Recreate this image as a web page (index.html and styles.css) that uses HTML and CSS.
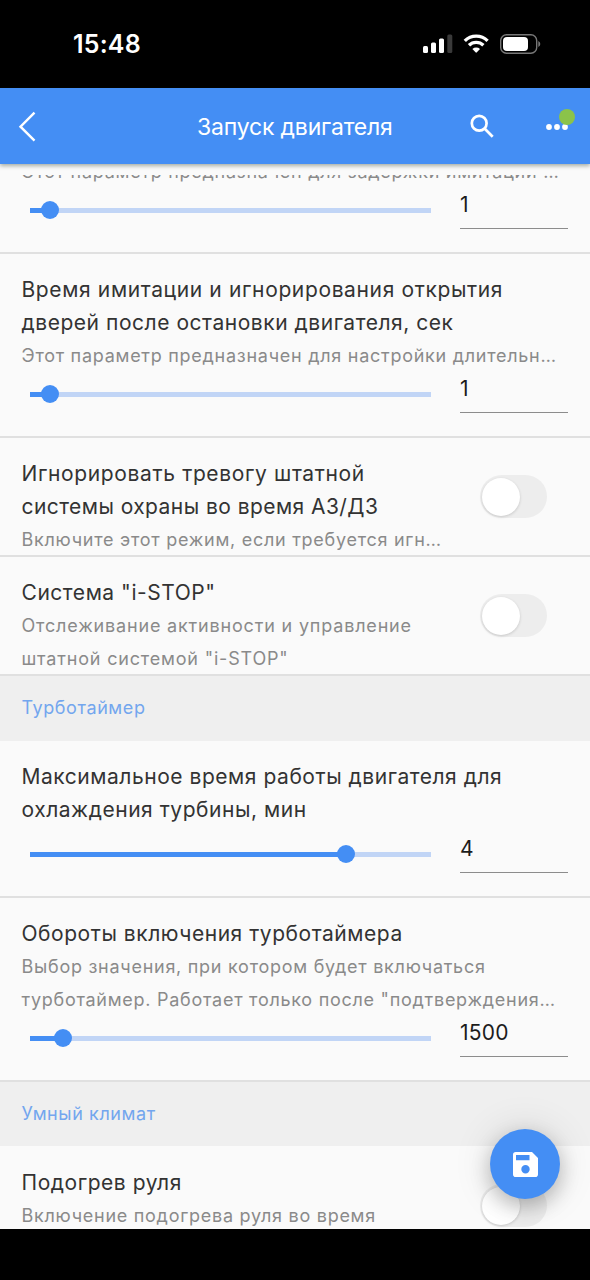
FILE: index.html
```html
<!DOCTYPE html>
<html lang="ru">
<head>
<meta charset="utf-8">
<title>Запуск двигателя</title>
<link rel="stylesheet" href="styles.css">
</head>
<body>
<div class="phone">
  <div class="status">
    <span class="clock">15:48</span>
    <svg class="status-icons" width="120" height="24" viewBox="0 0 120 24">
      <rect x="3" y="14" width="5" height="7" rx="1.5" fill="#fff"/>
      <rect x="11" y="10.500" width="5" height="10.500" rx="1.500" fill="#fff"/>
      <rect x="19" y="6.500" width="5" height="14.500" rx="1.500" fill="#fff"/>
      <rect x="27.300" y="2.500" width="5" height="18.500" rx="1.500" fill="#3a3a3a"/>
      <g fill="none" stroke="#fff" stroke-width="3.300">
        <path d="M44.800 8.800a16.200 16.200 0 0 1 22.800 0"/>
        <path d="M49 13.300a10.300 10.300 0 0 1 14.400 0"/>
      </g>
      <path d="M52.400 17a5.600 5.600 0 0 1 7.600 0l-3.100 3.300q-.7.700-1.400 0z" fill="#fff"/>
      <rect x="80.700" y="2.700" width="36" height="18.500" rx="5.800" fill="none" stroke="#777" stroke-width="1.400"/>
      <rect x="83" y="5" width="25" height="14" rx="4" fill="#fff"/>
      <path d="M118.300 9q2 1 2 3t-2 3z" fill="#777"/>
    </svg>
  </div>
  <header class="bar">
    <svg class="back" width="20" height="32" viewBox="0 0 20 32"><path d="M16.500 2.700L2.500 16.700l14 14" fill="none" stroke="#fff" stroke-width="2.400"/></svg>
    <h1 class="bar-title">Запуск двигателя</h1>
    <svg class="search" width="26" height="26" viewBox="0 0 26 26"><g fill="none" stroke="#fff" stroke-width="2.700"><circle cx="9.200" cy="10.200" r="7.400"/><path d="M14.300 15.300L22.700 23.700"/></g></svg>
    <div class="more">
      <svg width="24" height="8" viewBox="0 0 24 8" fill="#fff"><circle cx="4" cy="4" r="2.900"/><circle cx="12" cy="4" r="2.900"/><circle cx="20" cy="4" r="2.900"/></svg>
      <span class="online"></span>
    </div>
  </header>
  <main class="list">
    <section class="row row-cut">
      <p class="sub">Этот параметр предназначен для задержки имитации …</p>
      <div class="control"><div class="slider"><i class="fill" style="width:20px"></i><i class="thumb"></i></div><span class="value">1</span></div>
    </section>
    <section class="row row-tall">
      <h2 class="title"><span class="loose">Время имитации и игнорирования открытия</span><br>дверей после остановки двигателя, сек</h2>
      <p class="sub">Этот параметр предназначен для настройки длительн…</p>
      <div class="control"><div class="slider"><i class="fill" style="width:20px"></i><i class="thumb"></i></div><span class="value">1</span></div>
    </section>
    <section class="row row-switch">
      <div><h2 class="title"><span class="loose">Игнорировать тревогу штатной</span><br><span class="tight">системы охраны во время АЗ/ДЗ</span></h2>
      <p class="sub">Включите этот режим, если требуется игн…</p></div>
      <span class="switch"></span>
    </section>
    <section class="row row-switch">
      <div><h2 class="title">Система "i-STOP"</h2>
      <p class="sub sub-loose">Отслеживание активности и управление<br>штатной системой "i-STOP"</p></div>
      <span class="switch"></span>
    </section>
    <h3 class="group">Турботаймер</h3>
    <section class="row row-medium">
      <h2 class="title">Максимальное время работы двигателя для<br>охлаждения турбины, мин</h2>
      <div class="control"><div class="slider"><i class="fill" style="width:316px"></i><i class="thumb"></i></div><span class="value">4</span></div>
    </section>
    <section class="row row-tall">
      <h2 class="title">Обороты включения турботаймера</h2>
      <p class="sub">Выбор значения, при котором будет включаться<br>турботаймер. Работает только после "подтверждения…</p>
      <div class="control"><div class="slider"><i class="fill" style="width:33px"></i><i class="thumb"></i></div><span class="value">1500</span></div>
    </section>
    <h3 class="group group-short">Умный климат</h3>
    <section class="row row-switch row-last">
      <div><h2 class="title">Подогрев руля</h2>
      <p class="sub">Включение подогрева руля во время</p></div>
      <span class="switch"></span>
    </section>
    <button class="save" aria-label="Сохранить">
      <svg width="25" height="25" viewBox="0 0 25 25"><path fill="#fff" fill-rule="evenodd" d="M2.800 0H19l6 6v16.200a2.800 2.800 0 0 1-2.800 2.800H2.800A2.800 2.800 0 0 1 0 22.200V2.800A2.800 2.800 0 0 1 2.800 0zM3 3v5.300h13.500V3zM12.500 13a4.200 4.200 0 1 0 0 8.400 4.200 4.200 0 0 0 0-8.400z"/></svg>
    </button>
  </main>
</div>
</body>
</html>
```
FILE: styles.css
```css
* { box-sizing: border-box; }
body { margin: 0; background: #000; font-family: Inter, "Noto Sans", sans-serif; }
h1, h2, h3, p { margin: 0; font-weight: 400; }
.phone { width: 590px; height: 1280px; display: flex; flex-direction: column; overflow: hidden; }
.status { height: 88px; flex: none; display: flex; justify-content: space-between; padding: 32px 50px 0 73px; color: #fff; }
.clock { font-size: 25px; line-height: 25px; font-weight: 600; letter-spacing: .2px; }
.status-icons { overflow: visible; }
.bar { position: relative; z-index: 1; height: 76px; flex: none; display: grid; grid-template-columns: 179px 230px 60px 1fr; align-items: center; background: #448ef4; box-shadow: 0 2px 4px rgba(40, 60, 40, .4); color: #fff; }
.back { margin-left: 18px; }
.bar-title { font-size: 23px; line-height: 30px; letter-spacing: -.18px; white-space: nowrap; padding: 2px 0 0 18px; }
.search { margin-left: 61px; }
.more { position: relative; display: flex; margin: 1px 0 0 76px; }
.online { position: absolute; left: 14px; top: -14px; width: 16px; height: 16px; border-radius: 50%; background: #8bc34a; }
.list { position: relative; height: 1065px; flex: none; overflow: hidden; padding-top: 11px; background: #fafafa; }
.row { display: flex; flex-direction: column; padding: 19px 0 0 21.5px; border-bottom: 2px solid #e0e0e0; overflow: hidden; white-space: nowrap; }
.row-cut { height: 79px; padding-top: 0; justify-content: flex-end; }
.row-tall { height: 184px; }
.row-medium { height: 157px; }
.row-switch { height: 119px; flex-direction: row; justify-content: space-between; padding-right: 43px; }
.row-last { padding-top: 20px; }
.title { font-size: 21px; line-height: 33px; letter-spacing: .54px; color: #333; }
.loose { letter-spacing: .63px; }
.tight { letter-spacing: .44px; }
.sub { flex: none; font-size: 18px; line-height: 33px; letter-spacing: .73px; color: #8a8a8a; }
.sub-loose { letter-spacing: .82px; }
.group { height: 65px; padding-left: 21.5px; background: #efefef; color: #73a6ee; font-size: 18px; line-height: 64px; letter-spacing: .58px; }
.group-short { height: 64px; }
.control { flex: none; height: 64px; margin-top: auto; display: flex; justify-content: space-between; padding: 0 22px 0 8px; }
.slider { width: 401px; height: 44px; display: flex; align-items: center; background: linear-gradient(#c1d5f6, #c1d5f6) center / 100% 5px no-repeat; }
.fill { height: 5px; background: #448ef4; }
.thumb { flex: none; width: 18px; height: 18px; margin-left: -9px; border-radius: 50%; background: #448ef4; }
.value { width: 108px; height: 41px; border-bottom: 1px solid #8c8c8c; font-size: 21px; line-height: 33px; letter-spacing: .2px; color: #1c1c1c; }
.switch { flex: none; width: 67px; height: 43px; margin-top: 18px; border-radius: 22px; background: #ededed; display: flex; align-items: center; padding-left: 2px; }
.switch::before { content: ""; width: 38px; height: 38px; border-radius: 50%; background: #fff; box-shadow: 0 1px 3px rgba(0, 0, 0, .16); }
.save { position: absolute; right: 30px; bottom: 30px; width: 70px; height: 70px; padding: 0; border: 0; border-radius: 50%; background: #448ef4; display: flex; align-items: center; justify-content: center; box-shadow: 0 8px 20px rgba(0, 0, 0, .24), 0 0 40px rgba(0, 0, 0, .12); }
```
